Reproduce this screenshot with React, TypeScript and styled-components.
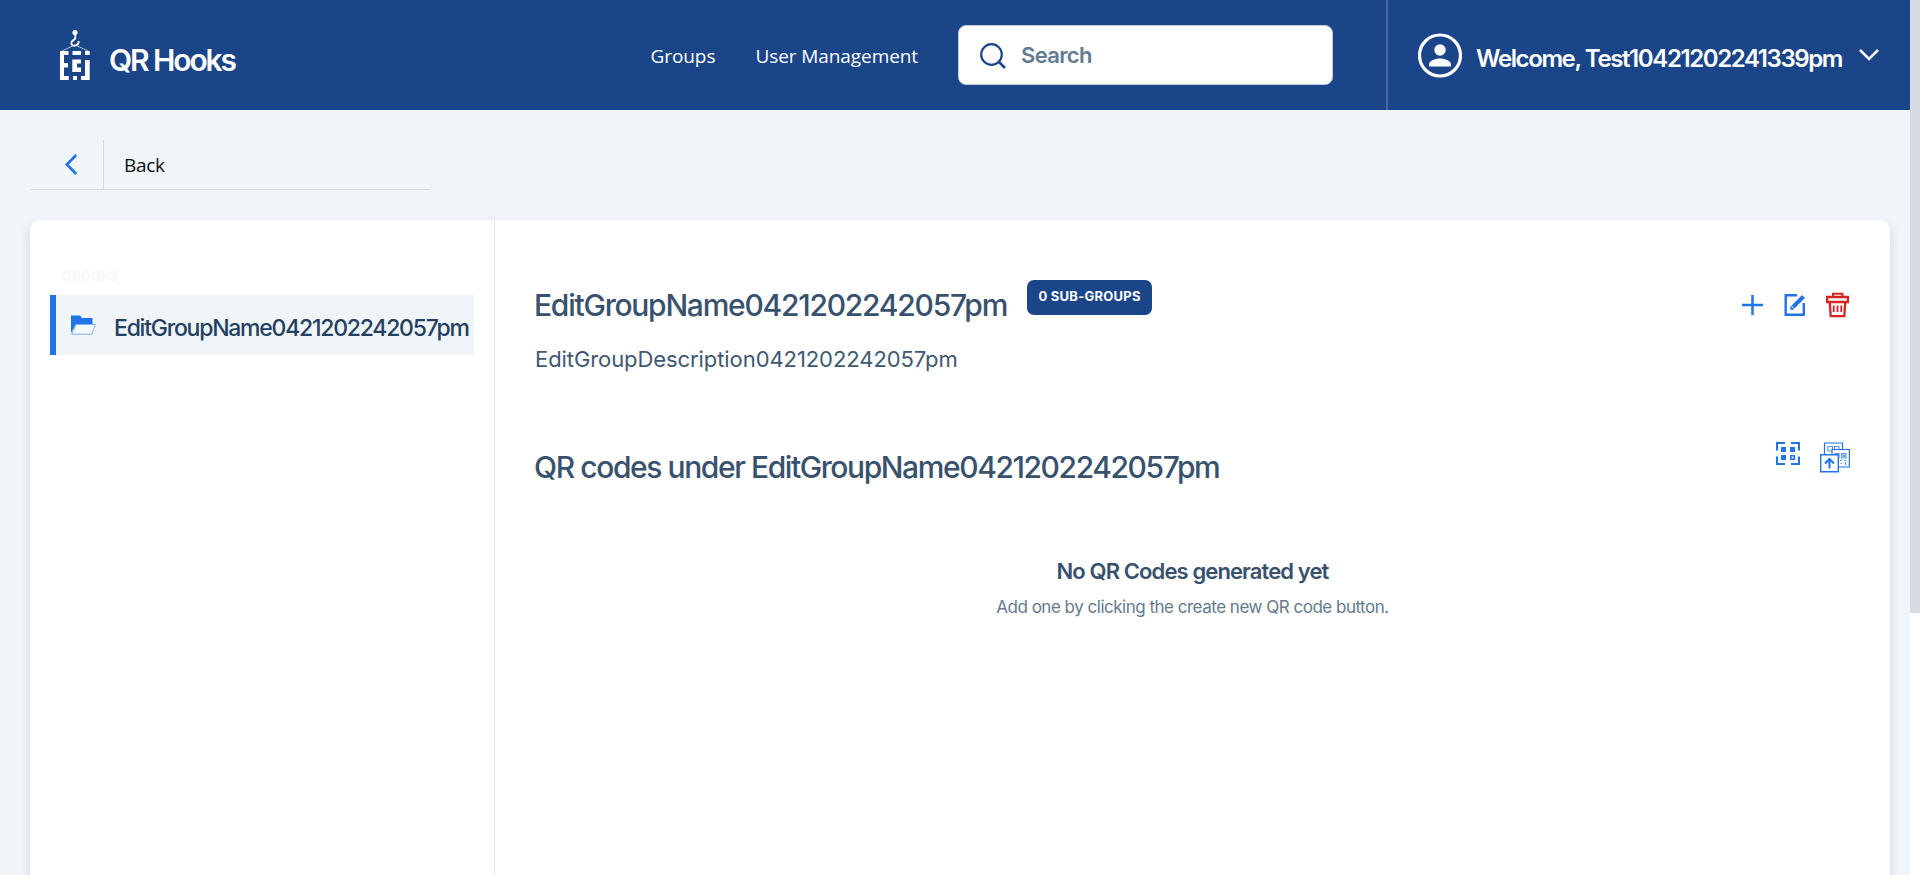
import React from 'react';
import styled, { createGlobalStyle } from 'styled-components';

const GlobalStyle = createGlobalStyle`
  *, *::before, *::after { box-sizing: border-box; }
  html, body { margin: 0; height: 100%; overflow: hidden; }
  body { background: #f0f5fa; font-family: Inter, "Liberation Sans", sans-serif; }
  h1, h2, h3, p { margin: 0; }
  svg { display: block; flex: none; }
`;

const Shell = styled.div`
  display: flex;
  height: 875px;
  overflow: hidden;
`;

const Page = styled.div`
  flex: 1;
  min-width: 0;
  display: flex;
  flex-direction: column;
`;

const ScrollTrack = styled.div`
  width: 10px;
  background: #fff;
`;

const ScrollThumb = styled.div`
  height: 613px;
  background: #d6dce1;
`;

const Header = styled.header`
  display: flex;
  align-items: center;
  flex: none;
  height: 110px;
  padding-left: 60px;
  background: #1b4589;
  color: #fff;
`;

const Brand = styled.a`
  display: flex;
  align-items: center;
  gap: 19px;
`;

const BrandName = styled.span`
  padding-top: 9px;
  font-size: 30px;
  font-weight: 600;
  line-height: 40px;
  letter-spacing: -2.1px;
  white-space: nowrap;
`;

const Nav = styled.nav`
  display: flex;
  align-items: center;
  gap: 40px;
  margin-left: auto;
  margin-right: 53px;
`;

const NavLink = styled.a`
  padding-top: 2px;
  font-family: "Open Sans", "Noto Sans", sans-serif;
  font-size: 19px;
  line-height: 28px;
  letter-spacing: -0.08px;
  white-space: nowrap;
`;

const SearchBox = styled.label`
  display: flex;
  align-items: center;
  gap: 13px;
  width: 375px;
  height: 60px;
  padding-left: 21px;
  border: 1px solid #c3ccd6;
  border-radius: 8px;
  background: #fff;
  color: #647b91;
  font-size: 22px;
  font-weight: 600;
  letter-spacing: -0.65px;
`;

const Account = styled.div`
  display: flex;
  align-items: center;
  width: 524px;
  height: 110px;
  padding-left: 30px;
  border-left: 2px solid #496aa1;
`;

const AccountName = styled.span`
  width: 383px;
  margin-left: 14px;
  padding-top: 7px;
  font-size: 24px;
  font-weight: 600;
  line-height: 30px;
  letter-spacing: -1.39px;
  white-space: nowrap;
`;

const BackBar = styled.div`
  display: flex;
  flex: none;
  width: 400px;
  height: 50px;
  margin: 30px 0 30px 30px;
  border-bottom: 1px solid #d5dae0;
`;

const BackButton = styled.div`
  width: 74px;
  padding: 14px 0 0 35px;
  border-right: 1px solid #d5dae0;
`;

const BackLabel = styled.span`
  padding-left: 20px;
  color: #0b0f14;
  font: 400 19px/50px "Open Sans", "Noto Sans", sans-serif;
  letter-spacing: -0.35px;
`;

const Panel = styled.main`
  display: flex;
  flex: none;
  height: 900px;
  margin: 0 20px 0 30px;
  border-radius: 10px;
  background: #fff;
  box-shadow: 0 5px 12px rgba(40, 60, 90, 0.16);
`;

const Sidebar = styled.aside`
  width: 465px;
  padding: 46px 20px 0;
  border-right: 1px solid #e6e9ed;
`;

const SidebarTitle = styled.div`
  padding-left: 12px;
  color: #f5f8fb;
  font-size: 13px;
  font-weight: 700;
  line-height: 20px;
  letter-spacing: 0.25px;
`;

const GroupRow = styled.div`
  display: flex;
  align-items: center;
  height: 60px;
  margin-top: 9px;
  padding-left: 15px;
  border-left: 6px solid #2174e6;
  background: #f0f5fa;
`;

const GroupName = styled.span`
  margin-left: 17px;
  padding-top: 5px;
  color: #243f5f;
  font-size: 23px;
  font-weight: 500;
  line-height: 30px;
  letter-spacing: -1.24px;
  white-space: nowrap;
`;

const Content = styled.section`
  flex: 1;
  padding: 60px 40px 0;
`;

const Row = styled.div<{ $top?: number }>`
  display: flex;
  align-items: flex-start;
  margin-top: ${(p) => p.$top ?? 0}px;
`;

const Title = styled.h1<{ $spacing: number }>`
  margin-left: -1px;
  padding-top: 1px;
  color: #38516d;
  font-size: 30px;
  font-weight: 500;
  line-height: 48px;
  letter-spacing: ${(p) => p.$spacing}px;
  white-space: nowrap;
`;

const Badge = styled.span`
  width: 125px;
  height: 35px;
  margin-left: 20px;
  border-radius: 7px;
  background: #1b4589;
  color: #fff;
  font-size: 13px;
  font-weight: 700;
  line-height: 33px;
  letter-spacing: 0.25px;
  text-align: center;
`;

const Actions = styled.div<{ $gap: number; $top: number; $right: number }>`
  display: flex;
  gap: ${(p) => p.$gap}px;
  margin-left: auto;
  padding-top: ${(p) => p.$top}px;
  margin-right: ${(p) => p.$right}px;
`;

const Description = styled.p`
  margin-top: 15px;
  color: #3f5871;
  font-size: 22px;
  line-height: 30px;
  letter-spacing: -0.08px;
`;

const Empty = styled.div`
  margin-top: 65px;
  text-align: center;
`;

const EmptyTitle = styled.h3`
  color: #38516d;
  font-size: 22px;
  font-weight: 600;
  line-height: 30px;
  letter-spacing: -0.887px;
`;

const EmptyText = styled.p`
  margin-top: 8px;
  color: #647b8c;
  font-size: 17px;
  line-height: 26px;
  letter-spacing: -0.494px;
`;

const Logo = () => (
  <svg width="30" height="50" viewBox="0 0 30 50" fill="#fff">
    <circle cx="15" cy="2.6" r="2.6" />
    <path d="M15.3 4v4.2c0 1.6-4 2-4 4.8 0 4.2 7.6 3.6 7.4-2" fill="none" stroke="#fff" strokeWidth="1.8" />
    <path d="M2 21 15 14.8 28 21" fill="none" stroke="#c5d1e3" strokeWidth="0.9" />
    <path d="M0 21h8.500v4H4v8h4v4.500H4V46h4.800v4H0z" />
    <path d="M12.500 21H21v4h-8.500zM25 21h4.700v4H25z" />
    <path d="M12.300 29.500H21v4h-4v4h4V42h-8.700z" />
    <path d="M13 46h4v4h-4zM25 30h4.700v20H21v-4h4z" />
  </svg>
);

const SearchIcon = () => (
  <svg width="28" height="28" viewBox="0 0 28 28" fill="none" stroke="#1b4589" strokeWidth="2.2">
    <circle cx="11.500" cy="13.500" r="10.300" />
    <path d="m18.500 20.500 6.500 6.500" strokeWidth="2.600" />
  </svg>
);

const UserIcon = () => (
  <svg width="44" height="46" viewBox="0 0 44 46" fill="#fff">
    <circle cx="22" cy="23.500" r="20.500" fill="none" stroke="#fff" strokeWidth="3.200" />
    <circle cx="22" cy="18" r="5.700" />
    <path d="M11 34.500v-2c0-3.800 6-6 11-6s11 2.200 11 6v2z" />
  </svg>
);

const ChevronDown = () => (
  <svg width="20" height="12" viewBox="0 0 20 12" fill="none" stroke="#fff" strokeWidth="2.500">
    <path d="m1 1 9 9 9-9" />
  </svg>
);

const ChevronLeft = () => (
  <svg width="13" height="21" viewBox="0 0 13 21" fill="none" stroke="#2174e6" strokeWidth="2.700">
    <path d="M11.200 1 1.800 10.500l9.400 9.500" />
  </svg>
);

const FolderIcon = () => (
  <svg width="26" height="20" viewBox="0 0 26 20">
    <path d="M0 .5h9l2 2.500h10.500v6H5L0 18z" fill="#2174e6" />
    <path d="M5.200 9.500h19.300l-3.700 9.700H.7z" fill="#f4f9ff" stroke="#7fb0f2" />
  </svg>
);

const PlusIcon = () => (
  <svg width="21" height="26" viewBox="0 0 21 26" stroke="#2174e6" strokeWidth="2.500">
    <path d="M0 13h21M10.500 3v20" />
  </svg>
);

const EditIcon = () => (
  <svg width="22" height="26" viewBox="0 0 22 26" fill="none" stroke="#2174e6" strokeWidth="2.400">
    <path d="M13 3.200H1.700v19.600h18.100V11" />
    <path d="m9 15 10.500-10.500" strokeWidth="4" />
    <path d="M6.500 18V13.500l4 4z" fill="#2174e6" stroke="none" />
  </svg>
);

const TrashIcon = () => (
  <svg width="23" height="26" viewBox="0 0 23 26" fill="none" stroke="#d52424" strokeWidth="2.300">
    <path d="M7 4.500V1.800h9.500v2.700" strokeWidth="2" />
    <path d="M1.100 5h20.800v5H1.100z" />
    <path d="m3.700 10 1 14.200h13.600l1-14.200" />
    <path d="M7.700 13.500v6.500M11.500 13.500v6.500M15.300 13.500v6.500" strokeWidth="1.800" />
  </svg>
);

const QrIcon = () => (
  <svg width="24" height="24" viewBox="0 0 24 24" fill="none" stroke="#2174e6" strokeWidth="2.200">
    <path d="M1 8.500V1h8M15 1h8v7.500M23 14.500V22h-8M9 22H1v-7.500" />
    <path d="M5 5h5v5H5zM14 5h5v5h-5zM5 13h5v5H5z" fill="#2174e6" stroke="none" />
    <path d="M14.800 13.800H18.200v3.400H14.800z" strokeWidth="1.600" />
  </svg>
);

const UploadQrIcon = () => (
  <svg width="30" height="31" viewBox="0 0 30 31" fill="#fff" stroke="#2174e6" strokeWidth="1.200">
    <path d="M4.500 1h18v17h-18z" />
    <path d="M8 4.500h4.500v4.500H8zM14.500 4.500H19v4.500h-4.500z" stroke="#5c9aed" />
    <path d="M12 7.500h17.400V25H12z" />
    <path d="M21.500 11.500H26V16h-4.500zM15 11.500h4V16h-4z" stroke="#5c9aed" />
    <path d="M23 13h1.500v1.500H23zM20 18.500h2M24 18.500h2M20.500 21.500h1.500M25.500 20v3" stroke="#5c9aed" />
    <path d="M.7 12.700h17.600v17.100H.7z" strokeWidth="1.400" />
    <path d="M9.500 26.500V17.500M5 21.500l4.500-4.500 4.500 4.500" fill="none" strokeWidth="2" />
  </svg>
);

export default function App() {
  return (
    <Shell>
      <GlobalStyle />
      <Page>
        <Header>
          <Brand>
            <Logo />
            <BrandName>QR Hooks</BrandName>
          </Brand>
          <Nav>
            <NavLink>Groups</NavLink>
            <NavLink>User Management</NavLink>
            <SearchBox>
              <SearchIcon />
              Search
            </SearchBox>
          </Nav>
          <Account>
            <UserIcon />
            <AccountName>Welcome, Test10421202241339pm</AccountName>
            <ChevronDown />
          </Account>
        </Header>
        <BackBar>
          <BackButton>
            <ChevronLeft />
          </BackButton>
          <BackLabel>Back</BackLabel>
        </BackBar>
        <Panel>
          <Sidebar>
            <SidebarTitle>GROUPS</SidebarTitle>
            <GroupRow>
              <FolderIcon />
              <GroupName>EditGroupName0421202242057pm</GroupName>
            </GroupRow>
          </Sidebar>
          <Content>
            <Row>
              <Title $spacing={-1.24}>EditGroupName0421202242057pm</Title>
              <Badge>0 SUB-GROUPS</Badge>
              <Actions $gap={20.500} $top={12} $right={1}>
                <PlusIcon />
                <EditIcon />
                <TrashIcon />
              </Actions>
            </Row>
            <Description>EditGroupDescription0421202242057pm</Description>
            <Row $top={68}>
              <Title as="h2" $spacing={-1.41}>QR codes under EditGroupName0421202242057pm</Title>
              <Actions $gap={20} $top={0} $right={0}>
                <QrIcon />
                <UploadQrIcon />
              </Actions>
            </Row>
            <Empty>
              <EmptyTitle>No QR Codes generated yet</EmptyTitle>
              <EmptyText>Add one by clicking the create new QR code button.</EmptyText>
            </Empty>
          </Content>
        </Panel>
      </Page>
      <ScrollTrack>
        <ScrollThumb />
      </ScrollTrack>
    </Shell>
  );
}
